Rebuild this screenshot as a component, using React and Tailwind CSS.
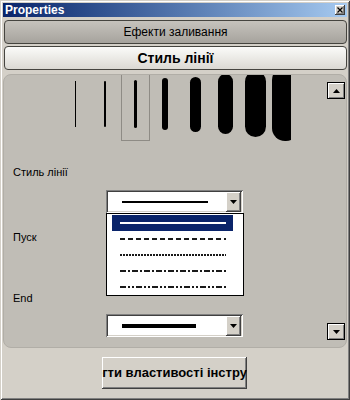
import React from 'react';

const raised = 'bg-[#d4d0c8] shadow-[inset_-1px_-1px_0_#404040,inset_1px_1px_0_#ffffff,inset_-2px_-2px_0_#808080]';
const sunken = 'bg-white shadow-[inset_1px_1px_0_#808080,inset_-1px_-1px_0_#ffffff,inset_2px_2px_0_#404040,inset_-2px_-2px_0_#d4d0c8]';

function Triangle({ up = false }) {
  return (
    <svg width="7" height="4" viewBox="0 0 7 4">
      <path d={up ? 'M3.5 0 L7 4 L0 4 Z' : 'M0 0 L7 0 L3.5 4 Z'} fill="#000" />
    </svg>
  );
}

function DropButton() {
  return (
    <div className={`w-[15px] h-[20px] flex items-center justify-center ${raised}`}>
      <Triangle />
    </div>
  );
}

function Combo({ thick = 2, lineW = 86, children }) {
  return (
    <div className="relative ml-[102px] w-[137px]">
      <div className={`h-[23px] flex items-center pl-[16px] pr-[2px] ${sunken}`}>
        <div className="flex-1 flex items-center">
          <div className="bg-black" style={{ width: lineW, height: thick }} />
        </div>
        <DropButton />
      </div>
      {children}
    </div>
  );
}

const patterns = [
  { dash: null, selected: true },
  { dash: '5 3' },
  { dash: '2 1' },
  { dash: '6 2 2 2' },
  { dash: '6 2 2 2 2 2' },
];

function StyleList() {
  return (
    <div className="absolute left-0 top-full w-[138px] bg-white border border-black pt-[1px] pl-[5px] z-10">
      {patterns.map((p, i) => (
        <div
          key={i}
          className={`h-[16px] w-[121px] flex items-center pl-[8px] ${p.selected ? 'bg-[#0a246a]' : ''}`}
        >
          <svg width="106" height="2">
            <line
              x1="0"
              y1="1"
              x2="106"
              y2="1"
              stroke={p.selected ? '#ffffff' : '#1a1a1a'}
              strokeWidth="2"
              strokeDasharray={p.dash || undefined}
            />
          </svg>
        </div>
      ))}
    </div>
  );
}

function WidthStrip() {
  return (
    <svg width="300" height="68" viewBox="4 74 300 68" className="block">
      <defs>
        <clipPath id="clip8">
          <rect x="260" y="60" width="31" height="90" />
        </clipPath>
      </defs>
      <rect x="121.5" y="73.5" width="28" height="66" fill="none" stroke="#8e8b85" />
      <rect x="75" y="80" width="1" height="46" fill="#000" />
      <rect x="104" y="80" width="2" height="46" rx="1" fill="#000" />
      <rect x="134" y="79" width="3" height="48" rx="1.5" fill="#000" />
      <rect x="162" y="77" width="6" height="52" rx="3" fill="#000" />
      <rect x="190" y="76" width="11" height="55" rx="5.5" fill="#000" />
      <rect x="218" y="73" width="15" height="60" rx="7.5" fill="#000" />
      <rect x="245" y="70" width="21" height="66" rx="10.5" fill="#000" />
      <rect x="272" y="66" width="27" height="74" rx="13" fill="#000" clipPath="url(#clip8)" />
    </svg>
  );
}

export default function App() {
  return (
    <div
      className="w-[350px] h-[400px] bg-[#d4d0c8] flex flex-col shadow-[inset_1px_1px_0_#d4d0c8,inset_-1px_-1px_0_#404040,inset_2px_2px_0_#ffffff,inset_-2px_-2px_0_#808080] pt-[3px] pl-[3px] pr-[3px]"
      style={{ fontFamily: '"Liberation Sans", Arial, sans-serif' }}
    >
      {/* caption */}
      <div className="h-[14px] flex items-center justify-between bg-gradient-to-r from-[#0a246a] to-[#a6caf0] pl-[2px] pr-[2px]">
        <span className="text-white font-bold text-[12px] leading-[14px]">Properties</span>
        <div className={`w-[10px] h-[10px] flex items-center justify-center ${raised}`}>
          <svg width="6" height="6" viewBox="0 0 6 6">
            <path d="M0.5 0.5 L5.5 5.5 M5.5 0.5 L0.5 5.5" stroke="#000" strokeWidth="1.2" />
          </svg>
        </div>
      </div>

      {/* tabs */}
      <div className="mt-[3px] ml-[1px] flex flex-col gap-[2px]">
        <div className="h-[24px] rounded-[4px] border border-[#45443f] bg-gradient-to-b from-[#c6c3bd] to-[#a6a39d] flex items-center justify-center text-[12px] text-black">
          Ефекти заливання
        </div>
        <div className="h-[24px] rounded-[4px] border border-[#45443f] bg-gradient-to-b from-[#fbfbf9] to-[#dbd9d3] flex items-center justify-center text-[14px] font-bold text-black">
          Стиль лінії
        </div>
      </div>

      {/* panel */}
      <div className="mt-[4px] h-[274px] w-[344px] rounded-[8px] border border-[#b1aea7] bg-[#c0bdb6] flex overflow-hidden">
        <div className="flex-1 flex flex-col">
          <WidthStrip />
          <div className="mt-[22px] ml-[9px] h-[14px] leading-[14px] text-[11px] text-black">Стиль лінії</div>
          <div className="mt-[11px]">
            <Combo thick={2} lineW={86}>
              <StyleList />
            </Combo>
          </div>
          <div className="mt-[17px] ml-[9px] h-[14px] leading-[14px] text-[11px] text-black">Пуск</div>
          <div className="mt-[9px]">
            <Combo thick={2} lineW={86} />
          </div>
          <div className="mt-[15px] ml-[9px] h-[14px] leading-[14px] text-[11px] text-black">End</div>
          <div className="mt-[9px]">
            <Combo thick={4} lineW={74} />
          </div>
        </div>
        <div className="w-[18px] mr-[1px] flex flex-col justify-between pt-[7px] pb-[7px]">
          <div className="w-[18px] h-[17px] border border-black bg-[#d4d0c8] shadow-[inset_1px_1px_0_#ffffff,inset_-1px_-1px_0_#808080] flex items-center justify-center">
            <Triangle up />
          </div>
          <div className="w-[18px] h-[17px] border border-black bg-[#d4d0c8] shadow-[inset_1px_1px_0_#ffffff,inset_-1px_-1px_0_#808080] flex items-center justify-center">
            <Triangle />
          </div>
        </div>
      </div>

      {/* bottom button */}
      <div className="mt-[9px] ml-[99px] w-[145px] h-[32px] overflow-hidden flex items-center justify-center bg-[#d4d0c8] shadow-[inset_-1px_-1px_0_#404040,inset_1px_1px_0_#ffffff,inset_-2px_-2px_0_#808080]">
        <span className="whitespace-nowrap font-bold text-[13px] text-black">Зберегти властивості інструменту</span>
      </div>
    </div>
  );
}
